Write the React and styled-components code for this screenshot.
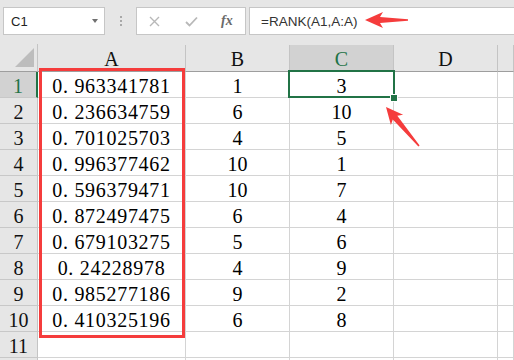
import React from "react";
import styled, { createGlobalStyle } from "styled-components";

const GlobalStyle = createGlobalStyle`
  html, body {
    margin: 0;
    padding: 0;
    background: #e6e6e6;
  }
`;

const Page = styled.div`
  position: relative;
  width: 514px;
  height: 360px;
  overflow: hidden;
  background: #e6e6e6;
  font-family: "Liberation Serif", "Times New Roman", serif;
`;

const Toolbar = styled.div`
  display: flex;
  align-items: flex-start;
  height: 44px;
  padding: 7px 0 0 3px;
  box-sizing: border-box;
  font-family: "Liberation Sans", Arial, sans-serif;
`;

const Box = styled.div`
  height: 28px;
  box-sizing: border-box;
  background: #fff;
  border: 1px solid #c6c6c6;
  display: flex;
  align-items: center;
`;

const NameBox = styled(Box)`
  width: 102px;
  padding: 0 0 0 7px;
  justify-content: space-between;
  font-size: 13px;
  color: #222;
`;

const Caret = styled.span`
  width: 0;
  height: 0;
  margin-right: 6px;
  border-left: 3.5px solid transparent;
  border-right: 3.5px solid transparent;
  border-top: 4px solid #707070;
`;

const Grip = styled.div`
  width: 31px;
  height: 28px;
  display: flex;
  flex-direction: column;
  align-items: center;
  justify-content: center;
  gap: 2px;
  span {
    width: 2px;
    height: 2px;
    background: #a8a8a8;
  }
`;

const FuncBox = styled(Box)`
  width: 110px;
  padding: 0 0 0 12px;
`;

const FuncIcon = styled.span`
  flex: ${(p) => (p.$dark ? "0 0 auto" : "0 0 36px")};
  display: flex;
  align-items: center;
  color: ${(p) => (p.$dark ? "#6a6a6a" : "#b8b8b8")};
  font-family: "Liberation Serif", serif;
  font-style: italic;
  font-size: 14px;
  font-weight: bold;
`;

const Formula = styled(Box)`
  flex: 1;
  margin-left: 3px;
  padding-left: 11px;
  border-right: none;
  font-size: 13.5px;
  color: #333;
`;

const Sheet = styled.div`
  display: grid;
  grid-template-columns: 38px 148px 104px 104px 104px 1fr;
  grid-template-rows: 28px;
  grid-auto-rows: 26px;
`;

const Corner = styled.div`
  box-sizing: border-box;
  border-right: 1px solid #c4c4c4;
  border-bottom: 1px solid #9e9e9e;
  display: flex;
  align-items: flex-end;
  justify-content: flex-end;
  padding: 0 3px 4px 0;
  &::after {
    content: "";
    width: 0;
    height: 0;
    border-left: 19px solid transparent;
    border-bottom: 19px solid #bdbdbd;
  }
`;

const ColHead = styled.div`
  box-sizing: border-box;
  margin-top: 1px;
  background: ${(p) => (p.$active ? "#d2d2d2" : "#e6e6e6")};
  color: ${(p) => (p.$active ? "#217346" : "#111")};
  border-right: 1px solid #c4c4c4;
  border-bottom: 1px solid #9e9e9e;
  text-align: center;
  font-size: 20px;
  line-height: 28px;
`;

const RowHead = styled.div`
  box-sizing: border-box;
  background: ${(p) => (p.$active ? "#d2d2d2" : "#e6e6e6")};
  color: ${(p) => (p.$active ? "#217346" : "#111")};
  border-right: ${(p) => (p.$active ? "2px solid #217346" : "1px solid #c4c4c4")};
  border-bottom: 1px solid #c8c8c8;
  text-align: center;
  font-size: 20px;
  line-height: 26px;
  padding-top: 1px;
`;

const Cell = styled.div`
  box-sizing: border-box;
  background: #fff;
  border-right: 1px solid #d4d4d4;
  border-bottom: 1px solid #d4d4d4;
  text-align: center;
  font-size: 20px;
  line-height: 26px;
  padding-top: 1px;
  color: #000;
  white-space: pre;
  letter-spacing: ${(p) => (p.$wide ? "0.7px" : "0")};
`;

const RedFrame = styled.div`
  position: absolute;
  left: 39px;
  top: 68px;
  width: 146px;
  height: 270px;
  box-sizing: border-box;
  border: 3px solid #f53c3c;
`;

const Selection = styled.div`
  position: absolute;
  left: 288px;
  top: 70px;
  width: 107px;
  height: 28px;
  box-sizing: border-box;
  border: 2px solid #217346;
`;

const FillHandle = styled.div`
  position: absolute;
  left: 391px;
  top: 95px;
  width: 6px;
  height: 6px;
  background: #217346;
  box-shadow: 0 0 0 1px #fff;
`;

const Overlay = styled.svg`
  position: absolute;
  left: 0;
  top: 0;
  pointer-events: none;
`;

const data = [
  ["0. 963341781", "1", "3"],
  ["0. 236634759", "6", "10"],
  ["0. 701025703", "4", "5"],
  ["0. 996377462", "10", "1"],
  ["0. 596379471", "10", "7"],
  ["0. 872497475", "6", "4"],
  ["0. 679103275", "5", "6"],
  ["0. 24228978", "4", "9"],
  ["0. 985277186", "9", "2"],
  ["0. 410325196", "6", "8"],
  ["", "", ""],
  ["", "", ""],
];

// tapered arrow from tip (x1,y1) back to tail (x2,y2)
function arrowPoints(x1, y1, x2, y2, head = 18, wing = 8) {
  const len = Math.hypot(x2 - x1, y2 - y1);
  const ux = (x2 - x1) / len;
  const uy = (y2 - y1) / len;
  const px = -uy;
  const py = ux;
  const at = (d, w) => [x1 + ux * d + px * w, y1 + uy * d + py * w];
  const pts = [
    at(0, 0),
    at(head, wing),
    at(head - 3, 3),
    [x2 + px * 0.8, y2 + py * 0.8],
    [x2 - px * 0.8, y2 - py * 0.8],
    at(head - 3, -3),
    at(head, -wing),
  ];
  return pts.map((p) => p.map((v) => v.toFixed(1)).join(",")).join(" ");
}

export default function App() {
  return (
    <>
      <GlobalStyle />
      <Page>
        <Toolbar>
          <NameBox>
            C1
            <Caret />
          </NameBox>
          <Grip>
            <span />
            <span />
            <span />
          </Grip>
          <FuncBox>
            <FuncIcon>
              <svg width="11" height="11" viewBox="0 0 11 11">
                <path d="M1 1L10 10M10 1L1 10" stroke="currentColor" strokeWidth="1.4" />
              </svg>
            </FuncIcon>
            <FuncIcon>
              <svg width="13" height="11" viewBox="0 0 13 11">
                <path d="M1 6L4.5 9.5L12 1.5" stroke="currentColor" strokeWidth="1.8" fill="none" />
              </svg>
            </FuncIcon>
            <FuncIcon $dark>fx</FuncIcon>
          </FuncBox>
          <Formula>=RANK(A1,A:A)</Formula>
        </Toolbar>

        <Sheet>
          <Corner />
          <ColHead>A</ColHead>
          <ColHead>B</ColHead>
          <ColHead $active>C</ColHead>
          <ColHead>D</ColHead>
          <ColHead />
          {data.map((row, i) => (
            <React.Fragment key={i}>
              <RowHead $active={i === 0}>{i < 11 ? i + 1 : ""}</RowHead>
              <Cell $wide>{row[0]}</Cell>
              <Cell>{row[1]}</Cell>
              <Cell>{row[2]}</Cell>
              <Cell />
              <Cell />
            </React.Fragment>
          ))}
        </Sheet>

        <RedFrame />
        <Selection />
        <FillHandle />
        <Overlay width="514" height="360">
          <polygon points={arrowPoints(365, 20, 408, 20, 18, 8)} fill="#f53c3c" />
          <polygon points={arrowPoints(386, 107, 419, 146, 17, 8)} fill="#f53c3c" />
        </Overlay>
      </Page>
    </>
  );
}
